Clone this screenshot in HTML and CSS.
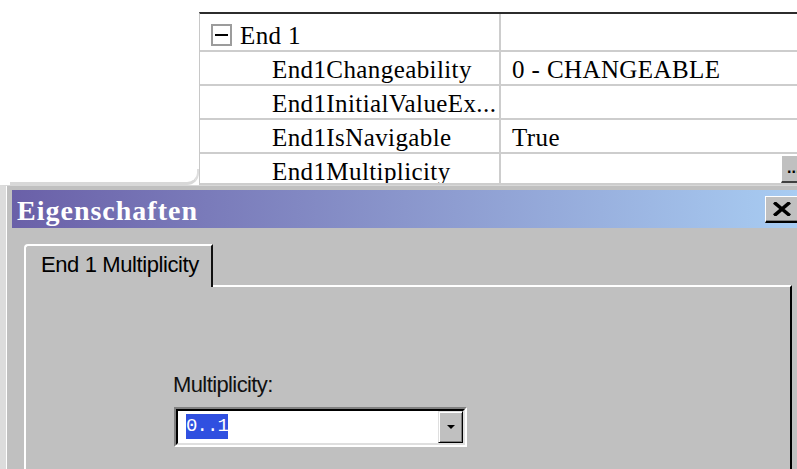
FILE: index.html
```html
<!DOCTYPE html>
<html lang="de">
<head>
<meta charset="utf-8">
<title>Eigenschaften</title>
<link rel="stylesheet" href="styles.css">
</head>
<body>
<div class="screen">
  <div class="top">
    <div class="margin"><div class="torn"></div></div>
    <div class="sheet">
      <div class="row row-first">
        <div class="name"><span class="toggle"><span class="minus"></span></span>End 1</div>
        <div class="value"></div>
      </div>
      <div class="row">
        <div class="name">End1Changeability</div>
        <div class="value">0 - CHANGEABLE</div>
      </div>
      <div class="row">
        <div class="name">End1InitialValueEx...</div>
        <div class="value"></div>
      </div>
      <div class="row">
        <div class="name">End1IsNavigable</div>
        <div class="value">True</div>
      </div>
      <div class="row row-last">
        <div class="name">End1Multiplicity</div>
        <div class="value"><span class="ellipsis-btn">...</span></div>
      </div>
    </div>
  </div>

  <div class="dialog">
    <div class="titlebar">
      <span class="title">Eigenschaften</span>
      <span class="close">
        <svg width="18" height="14" viewBox="0 0 18 14"><path d="M2.5 1.5 L15.5 12.5 M15.5 1.5 L2.5 12.5" stroke="#000" stroke-width="3.6" stroke-linecap="square"/></svg>
      </span>
    </div>
    <div class="tabs">
      <div class="tab">End 1 Multiplicity</div>
    </div>
    <div class="tabpage">
      <div class="field-label">Multiplicity:</div>
      <div class="combo">
        <div class="combo-inner">
          <div class="combo-text"><span class="sel">0..1</span></div>
          <div class="combo-btn"><span class="arrow"></span></div>
        </div>
      </div>
    </div>
  </div>
</div>
</body>
</html>
```

FILE: styles.css
```css
* { box-sizing: border-box; }

html, body { margin: 0; padding: 0; }

body {
  width: 797px;
  height: 469px;
  overflow: hidden;
  background: #fff;
}

.screen {
  display: flex;
  flex-direction: column;
  height: 469px;
}

/* ---- property grid ---- */
.top {
  flex: none;
  display: flex;
  height: 185px;
  overflow: hidden;
  background: #fff;
}

.margin {
  width: 199px;
  flex: none;
  display: flex;
  flex-direction: column;
  justify-content: flex-end;
}

.torn {
  height: 16px;
  margin-left: 10px;
  border-bottom: 3px solid #d8d8d8;
  border-right: 2px solid #dedede;
  border-bottom-right-radius: 12px;
}

.sheet {
  flex: 1;
  margin-top: 12px;
  border-top: 2px solid #2c2c2c;
  border-left: 1px solid #c8c8c8;
  font-family: "Liberation Serif", "Times New Roman", serif;
  font-size: 25px;
  letter-spacing: 0.4px;
  line-height: 28px;
  color: #000;
}

.row {
  display: grid;
  grid-template-columns: 301px 1fr;
  height: 34px;
  border-bottom: 2px solid #cdcdcd;
}

.row-first { height: 38px; }
.row-last { height: 31px; }

.name {
  border-right: 2px solid #cdcdcd;
  padding: 4px 0 0 72px;
  white-space: nowrap;
  overflow: hidden;
}

.value {
  display: flex;
  padding: 4px 0 0 11px;
  white-space: nowrap;
}

.row-first .name,
.row-first .value { padding-top: 8px; }

.row-first .name {
  display: flex;
  align-items: flex-start;
  padding-left: 11px;
}

.toggle {
  width: 21px;
  height: 22px;
  margin: 2px 8px 0 0;
  border: 2px solid #9c9c9c;
  display: flex;
  align-items: center;
  justify-content: center;
}

.minus {
  width: 13px;
  height: 2px;
  background: #000;
}

.row-last .value { padding: 0; }

.ellipsis-btn {
  margin: 1px 0 0 auto;
  width: 16px;
  height: 28px;
  overflow: hidden;
  display: flex;
  align-items: flex-end;
  padding: 0 0 5px 5px;
  background: #c0c0c0;
  border-top: 1px solid #fff;
  border-left: 1px solid #fff;
  border-bottom: 2px solid #404040;
  font: bold 16px/16px "Liberation Sans", Arial, sans-serif;
  letter-spacing: 0;
  color: #000;
}

/* ---- properties dialog ---- */
.dialog {
  flex: 1;
  min-height: 0;
  overflow: hidden;
  display: flex;
  flex-direction: column;
  background: #c0c0c0;
  border-top: 1px solid #d8d8d8;
  border-left: 6px solid #dcdcdc;
  padding-top: 4px;
  box-shadow: inset 1px 0 #fff;
}

.titlebar {
  flex: none;
  display: flex;
  height: 38px;
  margin-left: 6px;
  background: linear-gradient(90deg, #6a60a8 0%, #8a96cc 50%, #a8ccf2 100%);
}

.title {
  padding: 4px 0 0 5px;
  font: bold 28px/34px "Liberation Serif", "Times New Roman", serif;
  letter-spacing: 1px;
  color: #fff;
}

.close {
  margin: 6px 0 0 auto;
  width: 32px;
  height: 27px;
  display: flex;
  align-items: center;
  justify-content: center;
  background: #c0c0c0;
  border-top: 1px solid #fff;
  border-left: 1px solid #fff;
  border-bottom: 2px solid #000;
  box-shadow: inset 0 -1px #808080;
}

.tabs {
  flex: none;
  display: flex;
  height: 41px;
  margin: 16px 0 0 18px;
}

.tab {
  position: relative;
  z-index: 1;
  width: 189px;
  height: 43px;
  margin-bottom: -2px;
  padding: 6px 0 0 15px;
  background: #c0c0c0;
  border-top: 2px solid #fff;
  border-left: 2px solid #fff;
  border-right: 2px solid #101010;
  border-top-left-radius: 4px;
  font: 22px/26px "Liberation Sans", Arial, sans-serif;
  letter-spacing: -0.4px;
  color: #000;
  white-space: nowrap;
}

.tabpage {
  flex: 1;
  width: 768px;
  margin-left: 18px;
  border-top: 2px solid #fff;
  border-left: 2px solid #fff;
  border-right: 2px solid #000;
  padding: 86px 0 0 147px;
}

.field-label {
  font: 22px/24px "Liberation Sans", Arial, sans-serif;
  letter-spacing: -0.6px;
  color: #111;
}

.combo {
  margin: 10px 0 0 1px;
  width: 293px;
  height: 40px;
  border: 2px solid;
  border-color: #808080 #fff #fff #808080;
}

.combo-inner {
  display: flex;
  height: 100%;
  background: #fff;
  border: 2px solid;
  border-color: #000 #dfdfdf #dfdfdf #000;
}

.combo-text {
  flex: 1;
  padding: 3px 0 0 8px;
}

.sel {
  display: inline-block;
  height: 25px;
  background: #3050e0;
  color: #fff;
  font: 19px/25px "Liberation Mono", "Courier New", monospace;
  letter-spacing: -0.9px;
}

.combo-btn {
  width: 25px;
  display: flex;
  align-items: center;
  justify-content: center;
  background: #c0c0c0;
  border: 1px solid;
  border-color: #dfdfdf #000 #000 #dfdfdf;
  box-shadow: inset 1px 1px #fff, inset -1px -1px #808080;
}

.arrow {
  width: 0;
  height: 0;
  border-left: 4px solid transparent;
  border-right: 4px solid transparent;
  border-top: 4px solid #000;
}
```
